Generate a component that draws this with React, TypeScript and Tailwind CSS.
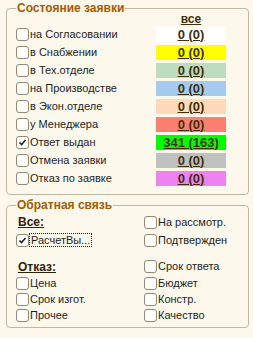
import React from "react"

const statuses = [
  { label: "на Согласовании", value: "0 (0)", bg: "bg-white", checked: false },
  { label: "в Снабжении", value: "0 (0)", bg: "bg-[#ffff00]", checked: false },
  { label: "в Тех.отделе", value: "0 (0)", bg: "bg-[#c0dcc0]", checked: false },
  { label: "на Производстве", value: "0 (0)", bg: "bg-[#a6caf0]", checked: false },
  { label: "в Экон.отделе", value: "0 (0)", bg: "bg-[#ffdab9]", checked: false },
  { label: "у Менеджера", value: "0 (0)", bg: "bg-[#fa8072]", checked: false },
  { label: "Ответ выдан", value: "341 (163)", bg: "bg-[#00ff00]", checked: true },
  { label: "Отмена заявки", value: "0 (0)", bg: "bg-[#c0c0c0]", checked: false },
  { label: "Отказ по заявке", value: "0 (0)", bg: "bg-[#ee82ee]", checked: false },
]

function Check({ checked = false }: { checked?: boolean }) {
  return (
    <span className="w-[13px] h-[13px] shrink-0 border border-[#8e8a78] rounded-[3px] bg-[#fffefa] flex items-center justify-center">
      {checked && (
        <svg width="9" height="9" viewBox="0 0 9 9">
          <path d="M1.5 4.5 L3.5 6.5 L7.5 2" fill="none" stroke="#222" strokeWidth="1.6" />
        </svg>
      )}
    </span>
  )
}

function Item({ label, checked, focused }: { label: string; checked?: boolean; focused?: boolean }) {
  return (
    <div className="flex items-center gap-[1px]">
      <Check checked={checked} />
      <span className={focused ? "outline outline-1 outline-dotted outline-[#222] px-[1px] leading-[12px]" : ""}>{label}</span>
    </div>
  )
}

export default function App() {
  return (
    <div className="w-[253px] h-[338px] bg-[#fcf8ec] pt-[2px] text-[11px] text-[#1e1e1e] font-['Liberation_Sans',Arial,sans-serif]">
      {/* Состояние заявки */}
      <fieldset className="ml-[6px] w-[243px] border border-[#bdb8a2] rounded-[4px] pl-[9px] pb-[7px]">
        <legend className="px-[1px] text-[12px] leading-[13px] font-bold text-[#a65b00]">Состояние заявки</legend>
        <div className="flex -mt-[2px] h-[12px] leading-[12px]">
          <div className="w-[140px]" />
          <div className="w-[70px] text-center text-[12px] font-bold underline text-[#40300a]">все</div>
        </div>
        {statuses.map((s) => (
          <div key={s.label} className="flex items-center h-[18px]">
            <div className="w-[140px]">
              <Item label={s.label} checked={s.checked} />
            </div>
            <div className={`${s.bg} w-[70px] h-[15px] flex items-center justify-center text-[13px] leading-[15px] font-bold underline text-[#40300a]`}>
              {s.value}
            </div>
          </div>
        ))}
      </fieldset>

      {/* Обратная связь */}
      <fieldset className="mt-[4px] ml-[6px] w-[243px] border border-[#bdb8a2] rounded-[4px] pl-[9px] pt-[1px] pb-[4px]">
        <legend className="px-[1px] text-[12px] leading-[13px] font-bold text-[#a65b00]">Обратная связь</legend>
        <div className="grid grid-cols-[128px_1fr]">
          <div className="h-[18px] flex items-center pl-[2px] text-[12px] font-bold underline text-[#2e2208]">Все:</div>
          <div className="h-[18px] flex items-center"><Item label="На рассмотр." /></div>
          <div className="h-[18px] flex items-center"><Item label="РасчетВы..." checked focused /></div>
          <div className="h-[18px] flex items-center"><Item label="Подтвержден" /></div>
          <div className="col-span-2 h-[9px]" />
          <div className="h-[17px] flex items-center pl-[2px] text-[12px] font-bold underline text-[#2e2208]">Отказ:</div>
          <div className="h-[17px] flex items-center"><Item label="Срок ответа" /></div>
          <div className="h-[16px] flex items-center"><Item label="Цена" /></div>
          <div className="h-[16px] flex items-center"><Item label="Бюджет" /></div>
          <div className="h-[16px] flex items-center"><Item label="Срок изгот." /></div>
          <div className="h-[16px] flex items-center"><Item label="Констр." /></div>
          <div className="h-[16px] flex items-center"><Item label="Прочее" /></div>
          <div className="h-[16px] flex items-center"><Item label="Качество" /></div>
        </div>
      </fieldset>
    </div>
  )
}
